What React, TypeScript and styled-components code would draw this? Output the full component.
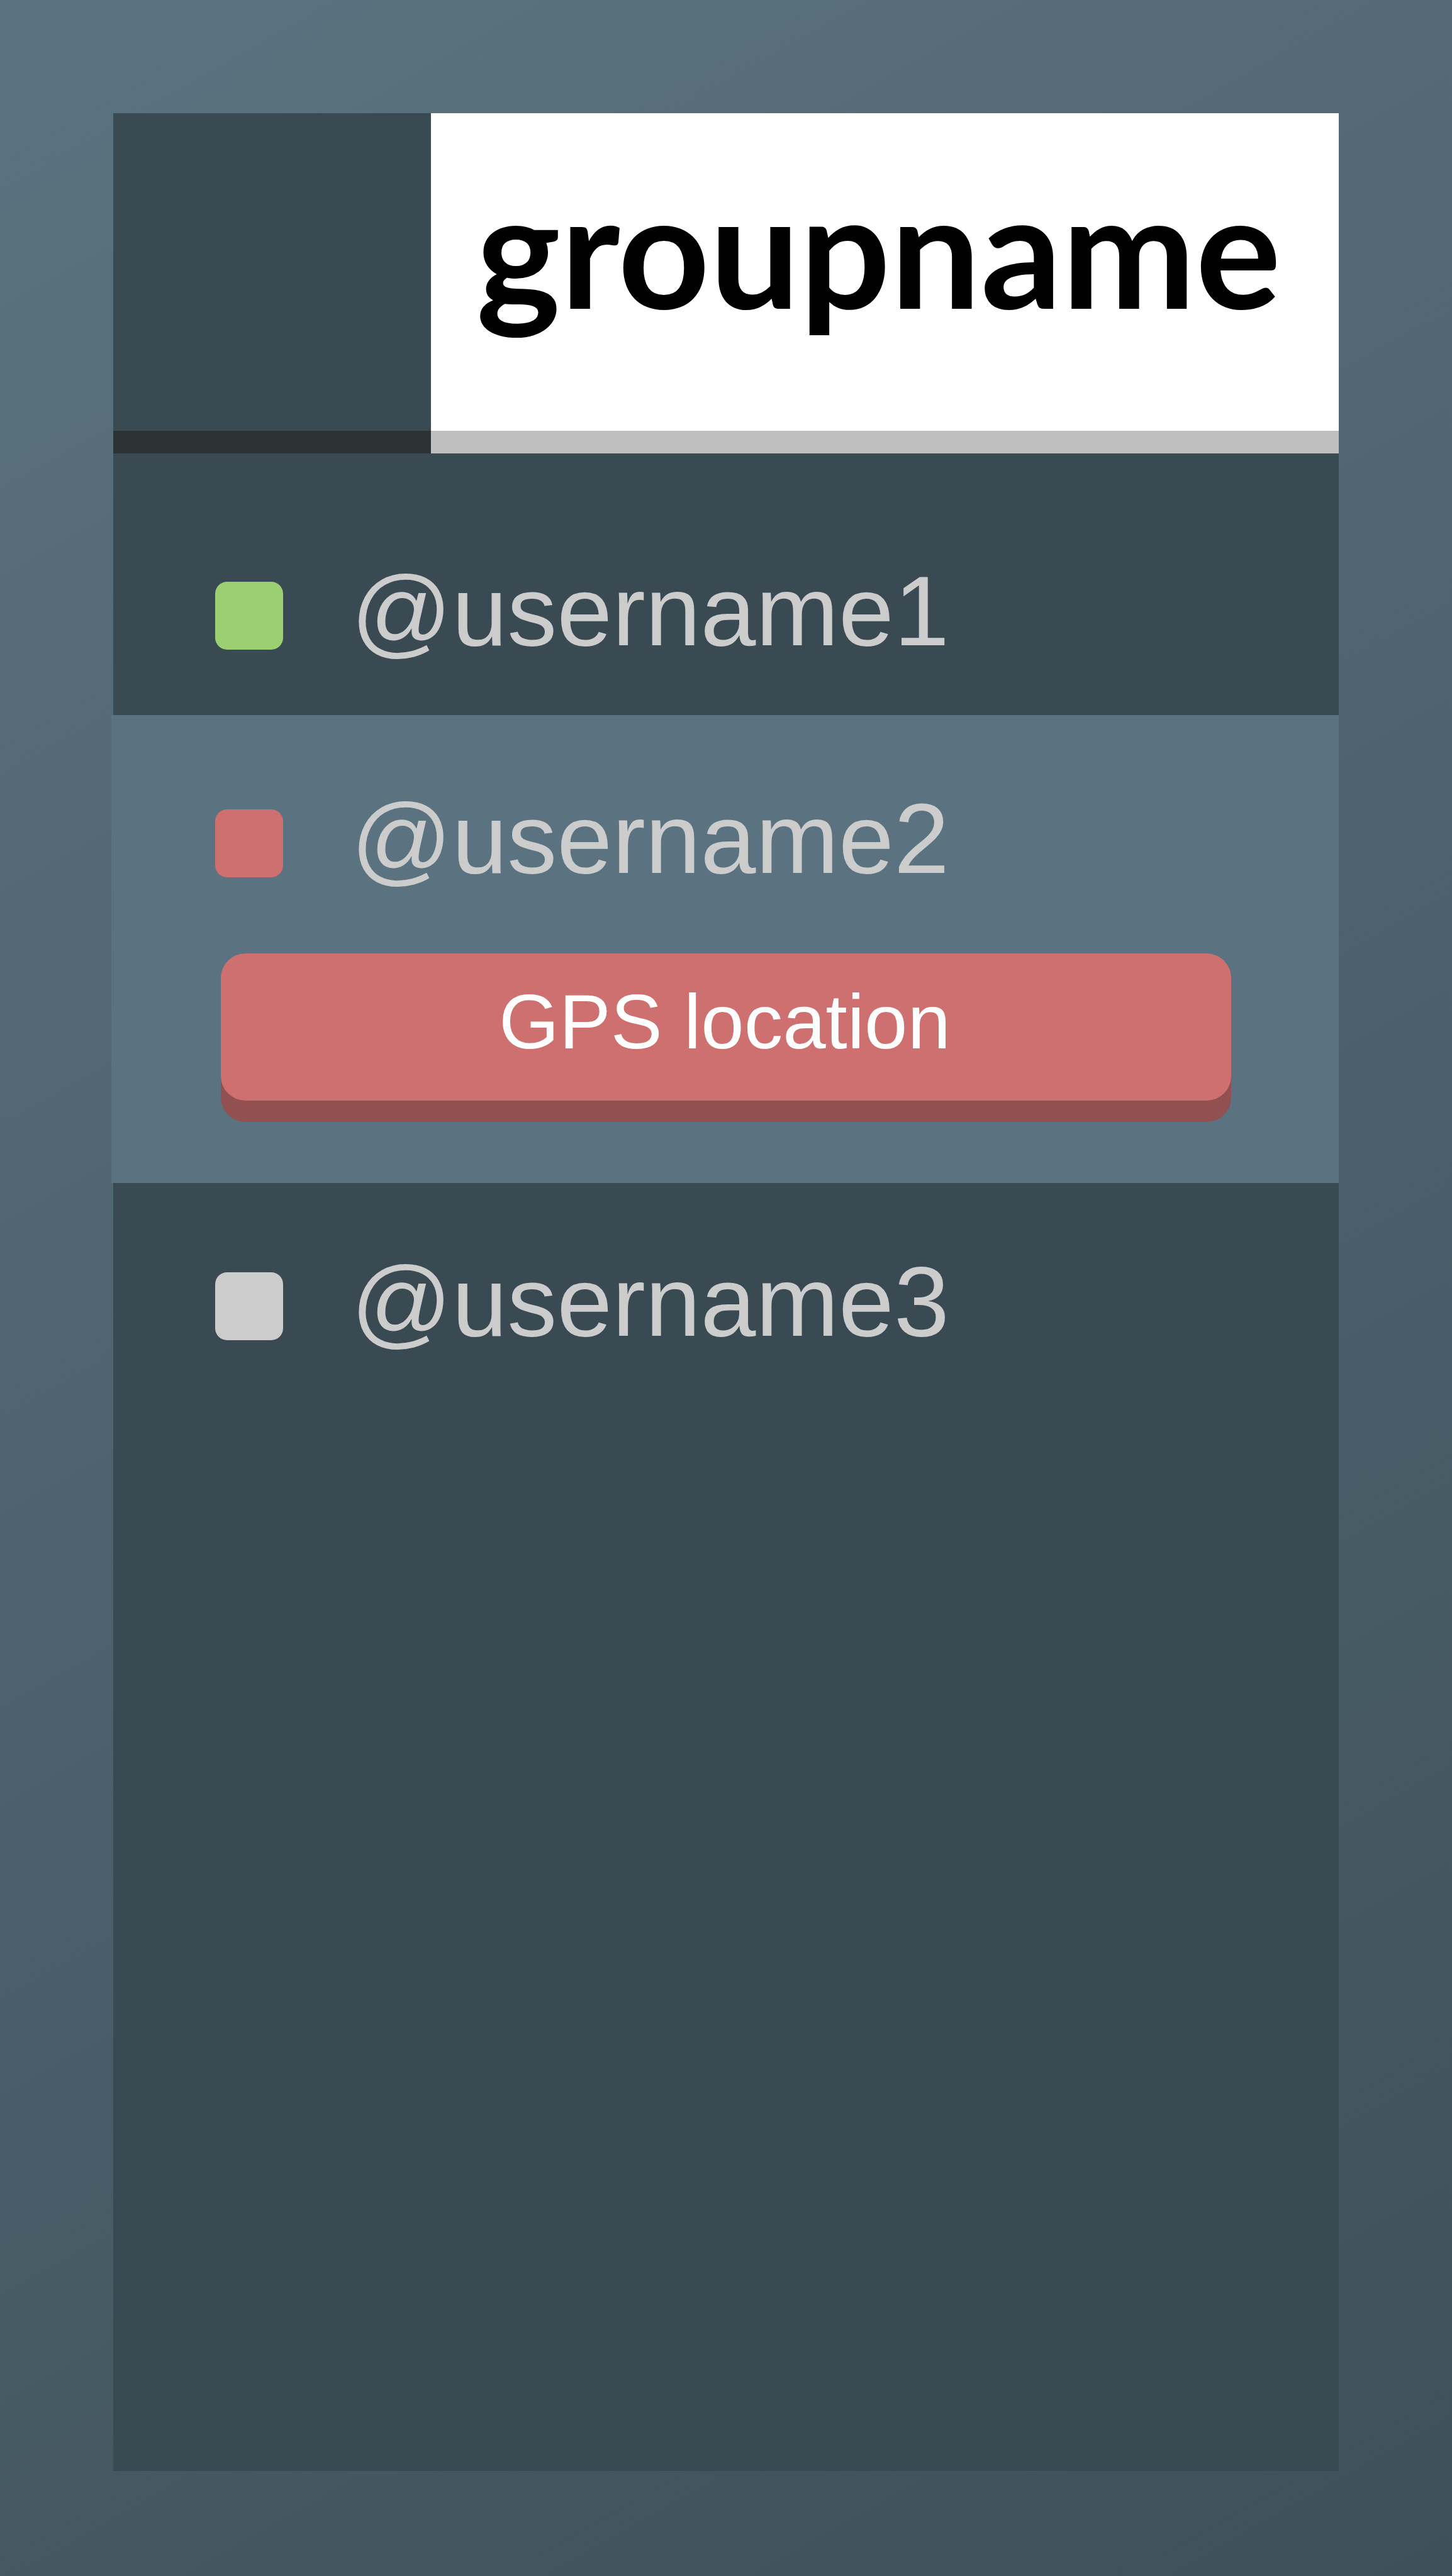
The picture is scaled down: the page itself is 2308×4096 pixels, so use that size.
import React from "react";
import styled, { createGlobalStyle } from "styled-components";

const colors = {
  slate: "#5b7380",
  slateDark: "#3e5059",
  panel: "#3a4a52",
  panelShade: "#2b3335",
  online: "#9bcf71",
  alert: "#cf7070",
  alertShade: "#925050",
  offline: "#cccccc",
};

const GlobalStyle = createGlobalStyle`
  * {
    box-sizing: border-box;
  }

  body {
    margin: 0;
    font-family: "Liberation Sans", Arial, sans-serif;
  }
`;

const Page = styled.div`
  display: flex;
  flex-direction: column;
  min-height: 100vh;
  padding: 180px 180px 167px;
  background: linear-gradient(150.6deg, ${colors.slate}, ${colors.slateDark});
`;

const Panel = styled.main`
  display: flex;
  flex-direction: column;
  flex: 1;
  background: ${colors.panel};
`;

const Header = styled.header`
  display: flex;
  height: 541px;
`;

const Corner = styled.div`
  flex: 0 0 505px;
  border-bottom: 36px solid ${colors.panelShade};
`;

const TitleBar = styled.div`
  display: flex;
  align-items: center;
  flex: 1;
  min-width: 0;
  padding: 0 72px 80px;
  border-bottom: 36px solid #bfbfbf;
  background: #ffffff;
`;

const GroupName = styled.h1`
  margin: 0;
  color: #000000;
  font-family: Lato, sans-serif;
  font-size: 254px;
  font-weight: 700;
  line-height: 304px;
`;

const MemberList = styled.ul`
  margin: 0;
  padding: 62px 0 0;
  list-style: none;
`;

const MemberRow = styled.li<{ $selected: boolean }>`
  display: flex;
  flex-direction: column;
  gap: 121px;
  margin-left: ${(p) => (p.$selected ? "-3px" : "0")};
  padding: ${(p) =>
    p.$selected ? "150px 171px 131px 165px" : "142px 171px 104px 162px"};
  background: ${(p) => (p.$selected ? colors.slate : "transparent")};
`;

const Identity = styled.div`
  display: flex;
  align-items: flex-start;
  gap: 108px;
  height: 108px;
`;

const Status = styled.span<{ $color: string }>`
  flex: 0 0 108px;
  height: 108px;
  border-radius: 19px;
  background: ${(p) => p.$color};
`;

const Username = styled.span`
  color: #cccccc;
  font-size: 158px;
  line-height: 92px;
`;

const LocationButton = styled.button`
  height: 234px;
  margin: 0 0 0 9px;
  padding: 0 4px 17px 0;
  border: 0;
  border-radius: 39px;
  background: ${colors.alert};
  box-shadow: 0 34px 0 ${colors.alertShade};
  color: #ffffff;
  font-family: inherit;
  font-size: 123px;
  line-height: 141px;
  cursor: pointer;
`;

type Member = { name: string; status: string; color: string; selected?: boolean };

const members: Member[] = [
  { name: "@username1", status: "online", color: colors.online },
  { name: "@username2", status: "alert", color: colors.alert, selected: true },
  { name: "@username3", status: "offline", color: colors.offline },
];

export default function App() {
  return (
    <>
      <GlobalStyle />
      <Page>
        <Panel>
          <Header>
            <Corner />
            <TitleBar>
              <GroupName>groupname</GroupName>
            </TitleBar>
          </Header>
          <MemberList>
            {members.map((m) => (
              <MemberRow key={m.name} $selected={!!m.selected}>
                <Identity>
                  <Status $color={m.color} role="img" aria-label={m.status} />
                  <Username>{m.name}</Username>
                </Identity>
                {m.selected && (
                  <LocationButton type="button">GPS location</LocationButton>
                )}
              </MemberRow>
            ))}
          </MemberList>
        </Panel>
      </Page>
    </>
  );
}
